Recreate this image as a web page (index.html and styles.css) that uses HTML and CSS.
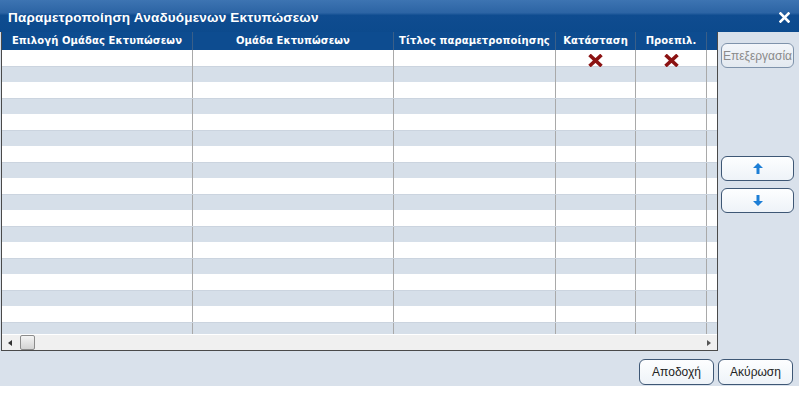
FILE: index.html
```html
<!DOCTYPE html>
<html lang="el">
<head>
  <meta charset="UTF-8">
  <title>Παραμετροποίηση Αναδυόμενων Εκτυπώσεων</title>
  <link rel="stylesheet" href="styles.css">
</head>
<body>
  <div class="dialog">
    <div class="titlebar">
      <span class="title">Παραμετροποίηση Αναδυόμενων Εκτυπώσεων</span>
      <svg class="close" width="11" height="11" viewBox="0 0 11 11">
        <path d="M1.5 1.5 L9.5 9.5 M9.5 1.5 L1.5 9.5" stroke="#fff" stroke-width="2.6" stroke-linecap="square"/>
      </svg>
    </div>

    <div class="content">
      <!-- Grid -->
      <div class="grid">
        <div class="row head">
          <div class="cell">Επιλογή Ομάδας Εκτυπώσεων</div>
          <div class="cell">Ομάδα Εκτυπώσεων</div>
          <div class="cell">Τίτλος παραμετροποίησης</div>
          <div class="cell">Κατάσταση</div>
          <div class="cell">Προεπιλ.</div>
          <div class="cell"></div>
        </div>
        <div class="rows" id="rows">
          <div class="row">
            <div class="cell"></div>
            <div class="cell"></div>
            <div class="cell"></div>
            <div class="cell"><svg class="cross" width="15" height="13" viewBox="0 0 15 13"><path d="M1.5 1 L13.5 12 M13.5 1 L1.5 12" stroke="#8c1313" stroke-width="3.6"/></svg></div>
            <div class="cell"><svg class="cross" width="15" height="13" viewBox="0 0 15 13"><path d="M1.5 1 L13.5 12 M13.5 1 L1.5 12" stroke="#8c1313" stroke-width="3.6"/></svg></div>
            <div class="cell"></div>
          </div>
        </div>
        <div class="hscroll">
          <span class="arrow left"></span>
          <span class="thumb"></span>
          <span class="arrow right"></span>
        </div>
      </div>

      <!-- Side buttons -->
      <div class="side">
        <button class="btn disabled">Επεξεργασία</button>
        <div class="moves">
          <button class="btn">
            <svg width="10" height="11" viewBox="0 0 10 11"><path d="M5 0 L10 5 L6.5 5 L6.5 11 L3.5 11 L3.5 5 L0 5 Z" fill="#1c7ed6"/></svg>
          </button>
          <button class="btn">
            <svg width="10" height="11" viewBox="0 0 10 11"><path d="M5 11 L10 6 L6.5 6 L6.5 0 L3.5 0 L3.5 6 L0 6 Z" fill="#1c7ed6"/></svg>
          </button>
        </div>
      </div>
    </div>

    <div class="footer">
      <button class="btn wide">Αποδοχή</button>
      <button class="btn wide">Ακύρωση</button>
    </div>
  </div>

  <script>
    var rows = document.getElementById('rows');
    for (var i = 1; i < 18; i++) {
      var row = document.createElement('div');
      row.className = 'row';
      for (var c = 0; c < 6; c++) {
        var cell = document.createElement('div');
        cell.className = 'cell';
        row.appendChild(cell);
      }
      rows.appendChild(row);
    }
  </script>
</body>
</html>
```

FILE: styles.css
```css
* {
  box-sizing: border-box;
}

body {
  margin: 0;
  width: 799px;
  height: 393px;
  overflow: hidden;
  background: #fff;
  font-family: "DejaVu Sans", Verdana, sans-serif;
}

.dialog {
  height: 386px;
  background-color: #d9e1eb;
  display: flex;
  flex-direction: column;
}

.titlebar {
  height: 32px;
  flex: none;
  display: flex;
  align-items: center;
  justify-content: space-between;
  padding: 2px 9px 0 8px;
  background: linear-gradient(#3d74b2 0%, #2c64a4 40%, #0f4c90 48%, #0c4a8d 100%);
}

.title {
  color: #fff;
  font-family: "Liberation Sans", Arial, sans-serif;
  font-weight: bold;
  font-size: 13.5px;
  letter-spacing: 0.2px;
}

.close {
  margin-top: 1px;
}

.content {
  display: flex;
  height: 319px;
  flex: none;
}

.grid {
  width: 717px;
  margin-left: 1px;
  border-left: 1px solid #4a4a4a;
  border-right: 1px solid #4a4a4a;
  border-bottom: 1px solid #4a4a4a;
  background: #fff;
  display: flex;
  flex-direction: column;
}

.row {
  display: grid;
  grid-template-columns: 191px 201px 162px 80px 71px 1fr;
  height: 16px;
  flex: none;
}

.rows {
  flex: 1;
  overflow: hidden;
}

.rows .row:nth-child(even) {
  background: #d6dfe9;
  border-top: 1px solid #cbd4df;
}

.cell {
  border-right: 1px solid #a9a9a9;
  display: flex;
  align-items: center;
  justify-content: center;
}

.row .cell:last-child {
  border-right: none;
}

.head {
  height: 18px;
  background: #0d4c90;
}

.head .cell {
  color: #fff;
  font-weight: bold;
  font-size: 10px;
  letter-spacing: 0.1px;
  border-right-color: #3a5f88;
  padding-bottom: 2px;
}

.cross {
  margin-top: 4px;
}

.hscroll {
  height: 16px;
  flex: none;
  background: #f0f0f0;
  border-top: 1px solid #fff;
  display: flex;
  align-items: center;
  padding: 0 6px 0 6px;
}

.arrow {
  width: 0;
  height: 0;
  border-top: 3px solid transparent;
  border-bottom: 3px solid transparent;
}

.arrow.left {
  border-right: 4px solid #333;
}

.arrow.right {
  border-left: 4px solid #555;
  margin-left: auto;
}

.thumb {
  width: 15px;
  height: 15px;
  margin-left: 8px;
  border: 1px solid #8c8c8c;
  border-radius: 2px;
  background: linear-gradient(#f4f4f4, #d3d3d3);
}

.side {
  flex: 1;
  display: flex;
  flex-direction: column;
  padding: 11px 5px 0 3px;
}

.btn {
  font-family: "Liberation Sans", Arial, sans-serif;
  font-size: 12px;
  color: #222;
  height: 25px;
  border: 1px solid #3e5775;
  border-radius: 6px;
  background: linear-gradient(#fdfeff, #eef3f8);
  display: flex;
  align-items: center;
  justify-content: center;
  padding: 0;
}

.btn.disabled {
  color: #8a8a8a;
  border-color: #7f93ab;
  background: linear-gradient(#f3f6fa, #e3e9f0);
}

.moves {
  margin-top: 88px;
  display: flex;
  flex-direction: column;
  gap: 7px;
}

.footer {
  flex: 1;
  display: flex;
  justify-content: flex-end;
  align-items: flex-end;
  gap: 4px;
  padding: 0 6px 1px 0;
}

.btn.wide {
  width: 75px;
  height: 26px;
}
```
